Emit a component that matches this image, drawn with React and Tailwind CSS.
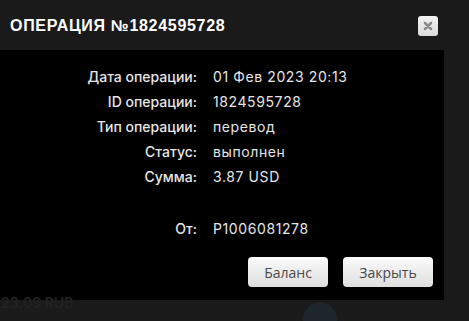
export default function App() {
  const rows = [
    ["Дата операции:", "01 Фев 2023 20:13"],
    ["ID операции:", "1824595728"],
    ["Тип операции:", "перевод"],
    ["Статус:", "выполнен"],
    ["Сумма:", "3.87 USD"],
  ];

  return (
    <div className="w-[469px] h-[321px] overflow-hidden bg-[#1a1a1a] flex font-['Inter',sans-serif]">
      <div className="w-[444px] flex flex-col shrink-0">
        {/* header */}
        <div className="h-[50px] flex items-center justify-between pl-[10px] pr-[6px]">
          <h1 className="text-white font-bold text-[16px] tracking-[0.7px] font-['Liberation_Sans',sans-serif] pt-[2px]">
            ОПЕРАЦИЯ №1824595728
          </h1>
          <button className="w-[20px] h-[20px] mt-[1px] rounded-[3px] bg-gradient-to-b from-[#f4f4f4] to-[#dcdcdc] flex items-center justify-center">
            <svg width="10" height="10" viewBox="0 0 10 10">
              <path d="M2 2L8 8M8 2L2 8" stroke="#8a8a8a" strokeWidth="2.6" strokeLinecap="round" />
            </svg>
          </button>
        </div>

        {/* body */}
        <div className="h-[250px] bg-black flex flex-col pt-[14px]">
          <div className="grid grid-cols-[197px_1fr] gap-x-[16px] text-[14px] leading-[25px]">
            {rows.map(([k, v]) => (
              <div key={k} className="contents">
                <div className="text-right text-[#e6e6e6] font-medium">{k}</div>
                <div className="text-[#e6e6e6] tracking-[0.6px]">{v}</div>
              </div>
            ))}
            <div className="h-[27px] col-span-2" />
            <div className="text-right text-[#e6e6e6] font-medium">От:</div>
            <div className="text-[#e6e6e6] tracking-[0.6px]">P1006081278</div>
          </div>

          <div className="flex justify-end gap-[15px] pr-[11px] mt-[16px]">
            <button className="w-[80px] h-[30px] rounded-[4px] bg-gradient-to-b from-[#fbfbfb] to-[#dedede] text-[#4a4a4a] text-[14px] font-['Open_Sans',sans-serif]">
              Баланс
            </button>
            <button className="w-[90px] h-[30px] rounded-[4px] bg-gradient-to-b from-[#fbfbfb] to-[#dedede] text-[#4a4a4a] text-[14px] font-['Open_Sans',sans-serif]">
              Закрыть
            </button>
          </div>
        </div>

        {/* faint page content below modal */}
        <div className="flex-1 flex items-start relative">
          <span className="text-[#212121] font-bold text-[14px] leading-none -mt-[4px] pl-[1px]">23.09 RUB</span>
          <span className="absolute left-[303px] top-[2px] w-[34px] h-[34px] rounded-full bg-[#1c262b]" />
        </div>
      </div>
      <div className="flex-1" />
    </div>
  );
}
